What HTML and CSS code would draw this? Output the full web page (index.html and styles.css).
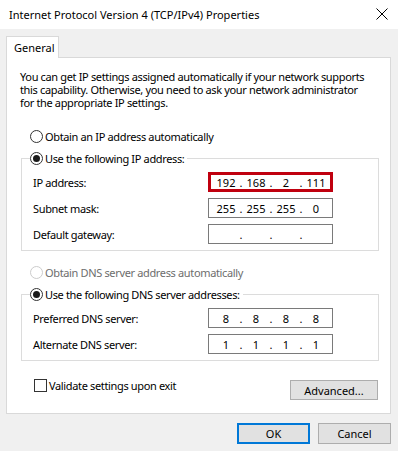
FILE: index.html
```html
<!DOCTYPE html>
<html lang="en">
<head>
    <meta charset="UTF-8">
    <title>Internet Protocol Version 4 (TCP/IPv4) Properties</title>
    <link rel="stylesheet" href="styles.css">
</head>
<body>
    <div class="window">
        <div class="titlebar">
            <span class="title">Internet Protocol Version 4 (TCP/IPv4) Properties</span>
            <svg class="close" width="12" height="12" viewBox="0 0 12 12">
                <path d="M0.5 0.5 L11.5 11.5 M11.5 0.5 L0.5 11.5" stroke="#000" stroke-width="1" fill="none"/>
            </svg>
        </div>

        <div class="tabs">
            <div class="tab">General</div>
        </div>

        <div class="panel">
            <p class="intro">You can get IP settings assigned automatically if your network supports<br>this capability. Otherwise, you need to ask your network administrator<br>for the appropriate IP settings.</p>

            <div class="choice first"><span class="radio"></span>Obtain an IP address automatically</div>

            <fieldset class="group">
                <legend class="choice"><span class="radio checked"></span>Use the following IP address:</legend>
                <div class="row">
                    <span class="label">IP address:</span>
                    <div class="ip highlight">
                        <span class="octet">192</span><span class="dot">.</span><span class="octet">168</span><span class="dot">.</span><span class="octet">2</span><span class="dot">.</span><span class="octet">111</span>
                    </div>
                </div>
                <div class="row">
                    <span class="label">Subnet mask:</span>
                    <div class="ip">
                        <span class="octet">255</span><span class="dot">.</span><span class="octet">255</span><span class="dot">.</span><span class="octet">255</span><span class="dot">.</span><span class="octet">0</span>
                    </div>
                </div>
                <div class="row">
                    <span class="label">Default gateway:</span>
                    <div class="ip">
                        <span class="octet"></span><span class="dot">.</span><span class="octet"></span><span class="dot">.</span><span class="octet"></span><span class="dot">.</span><span class="octet"></span>
                    </div>
                </div>
            </fieldset>

            <div class="choice second disabled"><span class="radio"></span>Obtain DNS server address automatically</div>

            <fieldset class="group">
                <legend class="choice"><span class="radio checked"></span>Use the following DNS server addresses:</legend>
                <div class="row">
                    <span class="label">Preferred DNS server:</span>
                    <div class="ip">
                        <span class="octet">8</span><span class="dot">.</span><span class="octet">8</span><span class="dot">.</span><span class="octet">8</span><span class="dot">.</span><span class="octet">8</span>
                    </div>
                </div>
                <div class="row">
                    <span class="label">Alternate DNS server:</span>
                    <div class="ip">
                        <span class="octet">1</span><span class="dot">.</span><span class="octet">1</span><span class="dot">.</span><span class="octet">1</span><span class="dot">.</span><span class="octet">1</span>
                    </div>
                </div>
            </fieldset>

            <div class="footer">
                <div class="choice"><span class="box"></span>Validate settings upon exit</div>
                <button class="btn advanced">Advanced...</button>
            </div>
        </div>

        <div class="actions">
            <button class="btn ok">OK</button>
            <button class="btn">Cancel</button>
        </div>
    </div>
</body>
</html>
```

FILE: styles.css
```css
body {
    margin: 0;
    background: #f0f0f0;
    font-family: "Noto Sans", "Liberation Sans", sans-serif;
    font-size: 11px;
    letter-spacing: -0.35px;
    color: #000;
}

.window {
    width: 398px;
    height: 451px;
}

/* title bar */
.titlebar {
    height: 29px;
    background: #fff;
    display: flex;
    align-items: center;
    justify-content: space-between;
    padding: 0 10px 0 9px;
}

.title {
    letter-spacing: 0;
}

.close {
    display: block;
    margin-top: -1px;
}

/* tab strip */
.tabs {
    margin-top: 7px;
    padding-left: 6px;
    display: flex;
}

.tab {
    position: relative;
    z-index: 1;
    width: 53px;
    height: 22px;
    box-sizing: border-box;
    margin-bottom: -1px;
    padding-left: 7px;
    border: 1px solid #d9d9d9;
    border-bottom: none;
    background: #fff;
    display: flex;
    align-items: center;
    letter-spacing: 0;
}

.panel {
    margin: 0 7px 0 6px;
    height: 357px;
    box-sizing: border-box;
    border: 1px solid #d9d9d9;
    background: #fff;
    padding: 12px 12px 0 13px;
}

.intro {
    margin: 0;
    line-height: 13px;
    white-space: nowrap;
}

/* radio / checkbox rows */
.choice {
    display: flex;
    align-items: center;
    height: 13px;
    line-height: 13px;
    white-space: nowrap;
}

.choice.first {
    margin: 21px 0 0 10px;
}

.choice.second {
    margin: 15px 0 0 10px;
}

.choice.disabled {
    color: #6d6d6d;
}

.radio {
    width: 13px;
    height: 13px;
    box-sizing: border-box;
    border: 1px solid #333;
    border-radius: 50%;
    background: #fff;
    display: flex;
    align-items: center;
    justify-content: center;
    margin-right: 2px;
    flex: none;
}

.radio.checked::after {
    content: "";
    width: 7px;
    height: 7px;
    border-radius: 50%;
    background: #1a1a1a;
}

.disabled .radio {
    border-color: #cccccc;
}

.box {
    width: 13px;
    height: 13px;
    box-sizing: border-box;
    border: 1px solid #333;
    background: #fff;
    margin-right: 2px;
    flex: none;
}

/* group boxes */
.group {
    margin: 8px 0 0 1px;
    width: 358px;
    box-sizing: border-box;
    padding: 6px 0 6px 0;
    border: 1px solid #dcdcdc;
}

.group legend {
    height: 15px;
    margin-left: 8px;
    padding: 0 3px 0 0;
}

.row {
    display: flex;
    align-items: center;
    height: 20px;
    padding-left: 11px;
}

.row + .row {
    margin-top: 6px;
}

.label {
    width: 175px;
}

.ip {
    width: 125px;
    height: 20px;
    box-sizing: border-box;
    border: 1px solid #7a7a7a;
    display: flex;
    align-items: center;
    padding-left: 6px;
    white-space: nowrap;
    letter-spacing: 0;
}

.ip.highlight {
    border: 3px solid #c0000f;
    padding-left: 4px;
}

.octet {
    width: 22px;
    text-align: center;
}

.dot {
    width: 8px;
    text-align: center;
}

/* bottom */
.footer {
    display: flex;
    justify-content: space-between;
    align-items: flex-start;
    margin-top: 18px;
    padding-left: 14px;
}

.btn {
    font-family: inherit;
    font-size: 11px;
    letter-spacing: 0;
    color: #000;
    background: #e1e1e1;
    border: 1px solid #adadad;
    padding: 0;
    margin: 0;
}

.advanced {
    width: 88px;
    height: 20px;
    margin-top: 1px;
}

.actions {
    display: flex;
    justify-content: flex-end;
    gap: 8px;
    margin-top: 9px;
    padding-right: 7px;
}

.actions .btn {
    width: 73px;
    height: 21px;
}

.btn.ok {
    border: 2px solid #0078d7;
}
```
